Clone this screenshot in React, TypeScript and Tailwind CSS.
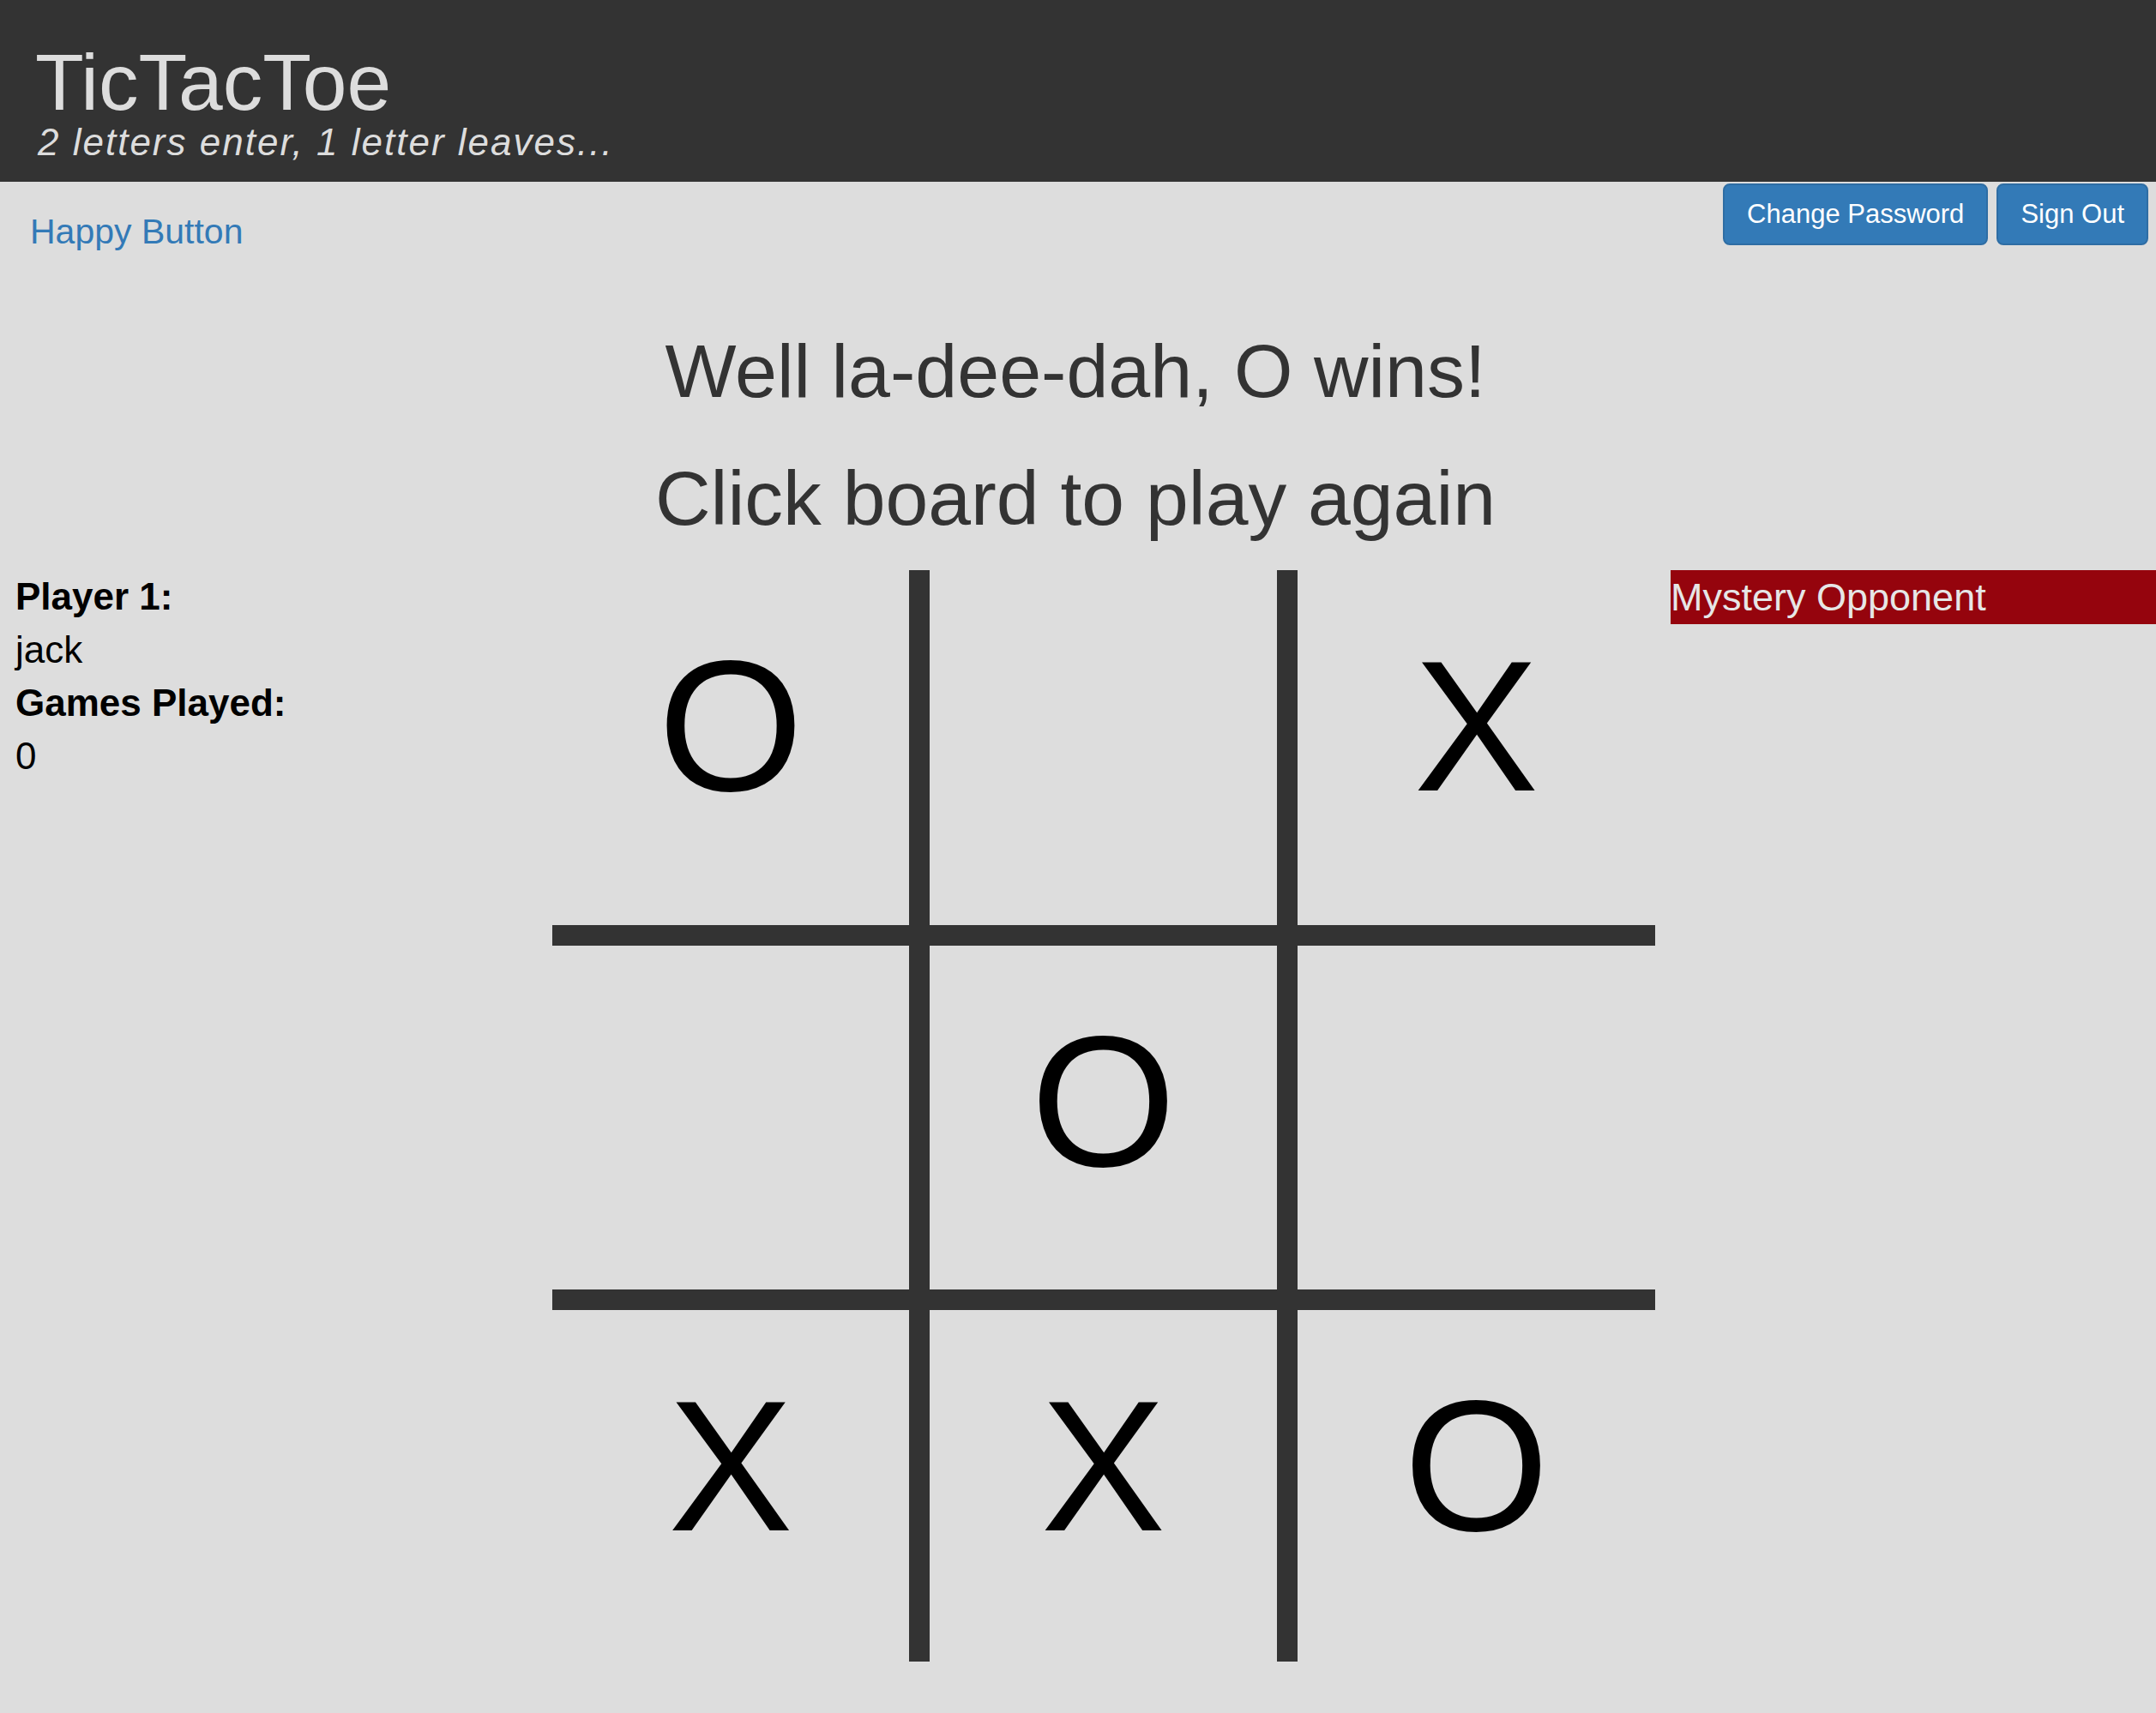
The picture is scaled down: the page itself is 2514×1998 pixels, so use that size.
import React from "react";

const font = { fontFamily: '"Liberation Sans", Arial, Helvetica, sans-serif' };

type Mark = "X" | "O" | "";

function Cell({ mark, col, row }: { mark: Mark; col: string; row: string }) {
  return (
    <div className={`${col} ${row} flex justify-center items-start pt-[73px]`}>
      <span className="text-[218px] leading-[218px] text-black">{mark}</span>
    </div>
  );
}

export default function App() {
  return (
    <div className="min-h-screen bg-[#dddddd] text-[#333333]" style={font}>
      <header className="h-[212px] bg-[#333333] pl-[41px] pt-[50px] text-[#dddddd]">
        <h1 className="text-[93px] leading-[92px] font-normal">TicTacToe</h1>
        <p className="ml-[3px] mt-[2px] text-[44px] leading-[44px] italic tracking-[2px]">
          2 letters enter, 1 letter leaves...
        </p>
      </header>

      <div className="flex h-[147px] items-start justify-between">
        <a className="ml-[35px] mt-[34px] text-[41px] leading-[48px] text-[#337ab7]" href="#">
          Happy Button
        </a>
        <div className="mr-[9px] mt-[2px] flex gap-[10px]">
          <button className="flex h-[72px] items-center rounded-[8px] border-2 border-[#2e6da4] bg-[#337ab7] px-[26px] text-[31px] text-white">
            Change Password
          </button>
          <button className="flex h-[72px] items-center rounded-[8px] border-2 border-[#2e6da4] bg-[#337ab7] px-[26px] text-[31px] text-white">
            Sign Out
          </button>
        </div>
      </div>

      <div className="pr-[6px] text-center leading-[148px] text-[#333333]">
        <h2 className="text-[88px] font-normal">Well la-dee-dah, O wins!</h2>
        <h2 className="text-[89.5px] font-normal">Click board to play again</h2>
      </div>

      <div className="mt-[10px] flex items-start">
        <div className="w-[644px] pl-[18px] text-[44px] leading-[62px] text-black">
          <div className="font-bold">Player 1:</div>
          <div>jack</div>
          <div className="font-bold">Games Played:</div>
          <div>0</div>
        </div>

        <div className="grid w-[1286px] grid-cols-[416px_24px_405px_24px_417px] grid-rows-[414px_24px_401px_24px_410px]">
          <div className="col-start-2 row-start-1 row-span-5 bg-[#333333]" />
          <div className="col-start-4 row-start-1 row-span-5 bg-[#333333]" />
          <div className="col-start-1 col-span-5 row-start-2 bg-[#333333]" />
          <div className="col-start-1 col-span-5 row-start-4 bg-[#333333]" />

          <Cell mark="O" col="col-start-1" row="row-start-1" />
          <Cell mark="" col="col-start-3" row="row-start-1" />
          <Cell mark="X" col="col-start-5" row="row-start-1" />
          <Cell mark="" col="col-start-1" row="row-start-3" />
          <Cell mark="O" col="col-start-3" row="row-start-3" />
          <Cell mark="" col="col-start-5" row="row-start-3" />
          <Cell mark="X" col="col-start-1" row="row-start-5" />
          <Cell mark="X" col="col-start-3" row="row-start-5" />
          <Cell mark="O" col="col-start-5" row="row-start-5" />
        </div>

        <div className="ml-[18px] flex-1">
          <div className="h-[63px] bg-[#95040d] text-[45px] leading-[63px] text-[#e6e6e6]">
            Mystery Opponent
          </div>
        </div>
      </div>
    </div>
  );
}
